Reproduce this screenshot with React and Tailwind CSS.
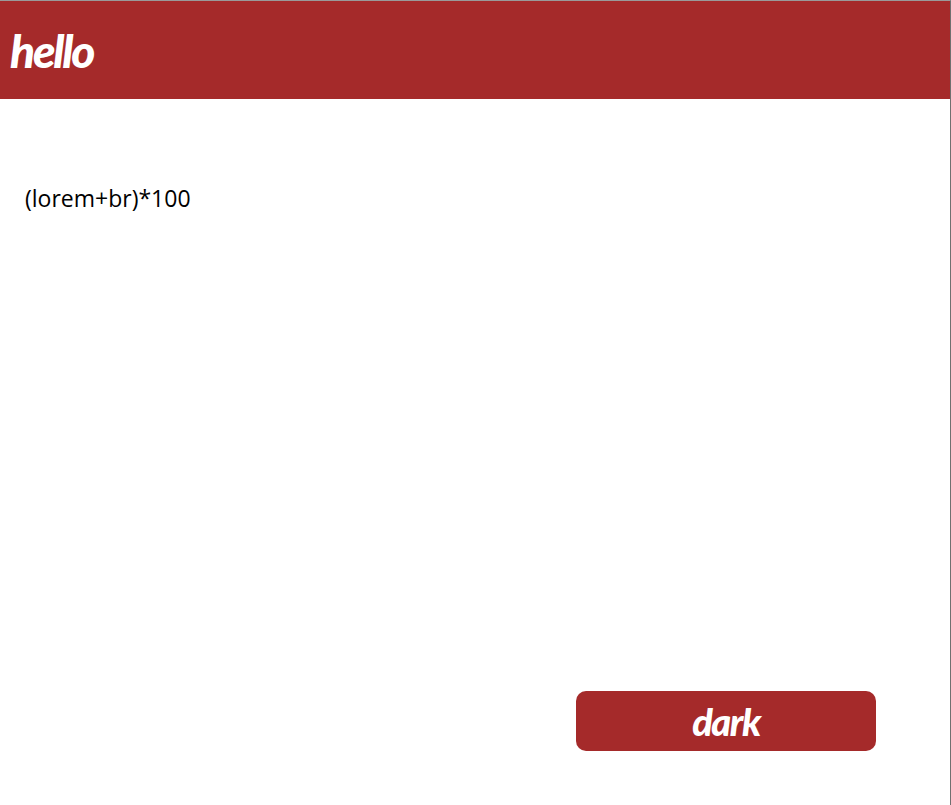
export default function App() {
  return (
    <div className="flex flex-col h-[805px] bg-white border-t border-r border-t-[#9a9a9a] border-r-[#707070] font-['Open_Sans',sans-serif] overflow-hidden">
      <header className="flex items-center h-[98px] px-[10px] bg-[#a52a2a] shrink-0">
        <h1 className="text-white text-[46px] font-black italic tracking-[-2.2px] font-['Lato','Noto_Sans',cursive]">hello</h1>
      </header>

      <main className="flex flex-col flex-1 pl-[25px] pr-6 pt-[84px] pb-[54px]">
        <p className="text-[23px] leading-[30px] text-black">(lorem+br)*100</p>

        <div className="flex justify-end mt-auto pr-[50px]">
          <button className="w-[300px] h-[60px] rounded-[10px] bg-[#a52a2a] text-white text-[38px] font-black italic tracking-[-1.5px] font-['Lato','Noto_Sans',cursive]">
            dark
          </button>
        </div>
      </main>
    </div>
  );
}
